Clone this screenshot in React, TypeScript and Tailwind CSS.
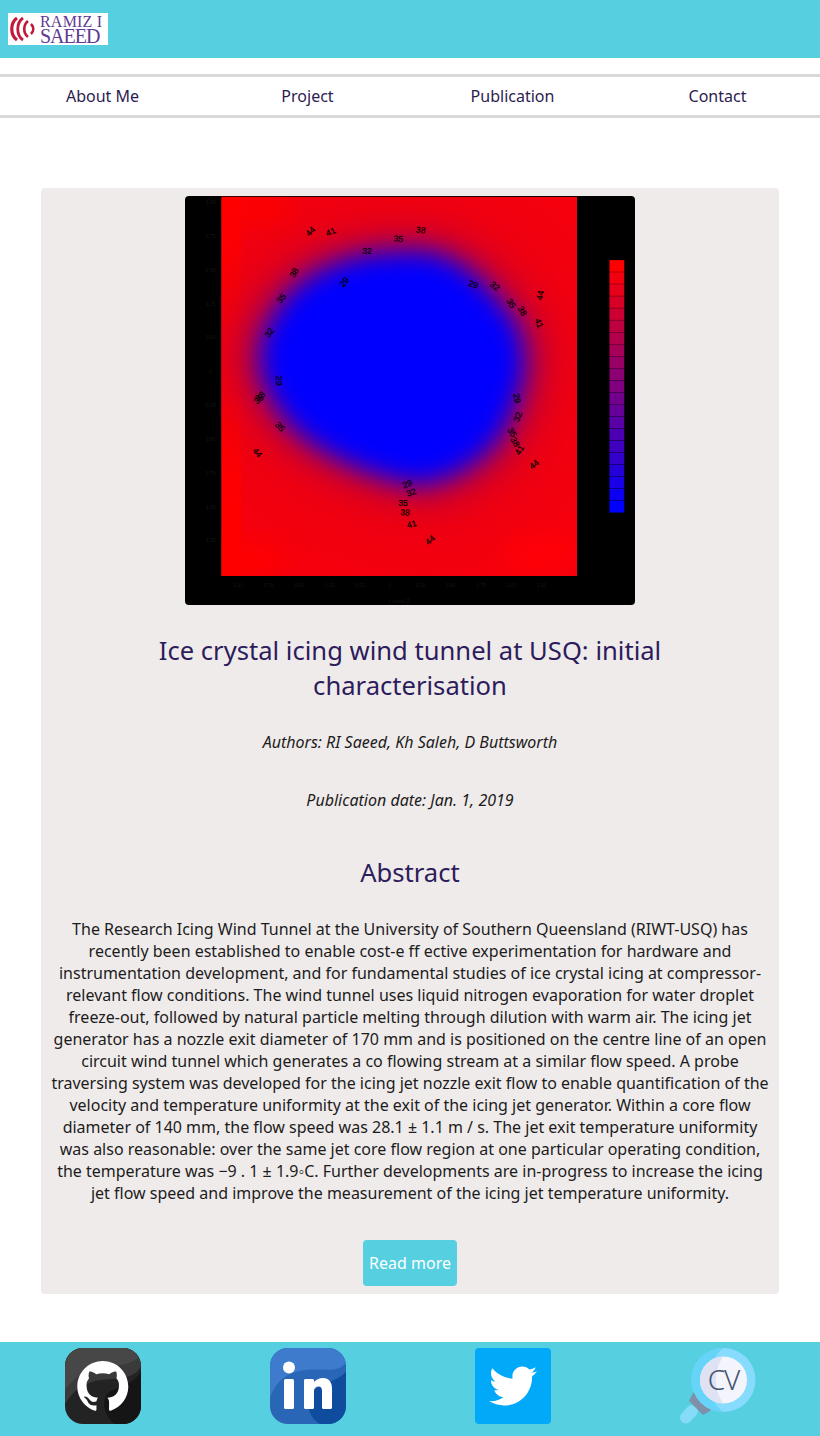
import { FaTwitter } from "react-icons/fa";

const labels: [string, number, number, number][] = [
  ["44", 391, 124, -45], ["41", 452, 125, -25], ["38", 722, 120, 5], ["35", 655, 146, 5], ["32", 561, 183, 0],
  ["38", 342, 248, -60], ["35", 304, 325, -50], ["32", 268, 428, -55], ["29", 493, 276, -50], ["29", 298, 572, 90],
  ["38", 240, 618, -40], ["35", 236, 628, -40], ["35", 300, 710, 50], ["44", 232, 788, 50],
  ["29", 880, 283, 20], ["32", 945, 288, 40], ["35", 993, 340, 60], ["38", 1027, 363, 60], ["41", 1077, 400, 70], ["44", 1080, 316, -80],
  ["29", 1011, 625, 80], ["32", 1013, 680, -70], ["35", 996, 727, 60], ["38", 1005, 756, 60], ["41", 1018, 780, -60], ["44", 1062, 823, -40],
  ["29", 682, 882, -20], ["32", 694, 907, -20], ["35", 669, 938, 0], ["38", 675, 967, 5], ["41", 695, 1002, -15], ["44", 750, 1050, -40],
];

const xTicks = ["1.00", "0.75", "0.50", "0.25", "0.00", "0", "0.25", "0.50", "0.75", "1.00", "1.00"];
const yTicks = ["1.00", "0.75", "0.50", "0.25", "0.00", "0", "0.25", "0.50", "0.75", "1.00", "1.25"];

const bar = Array.from({ length: 21 }, (_, i) => {
  const t = i / 20;
  const r = Math.round(255 * (1 - t));
  const b = Math.round(255 * t);
  return `rgb(${r},0,${b})`;
});

const blob =
  "M660 190C800 170 900 260 980 370C1040 440 1040 560 1000 640C970 760 860 860 720 880C560 860 350 760 290 640C220 540 240 440 290 370C350 260 500 190 660 190Z";

function Heatmap() {
  return (
    <svg viewBox="15 18 1350 1227" className="block h-[409px] w-[450px]">
      <defs>
        <clipPath id="plot">
          <rect x="124" y="20" width="1067" height="1138" />
        </clipPath>
        <filter id="b1" x="-40%" y="-40%" width="180%" height="180%" colorInterpolationFilters="sRGB">
          <feGaussianBlur stdDeviation="70" />
        </filter>
        <filter id="b2" x="-40%" y="-40%" width="180%" height="180%" colorInterpolationFilters="sRGB">
          <feGaussianBlur stdDeviation="46" />
        </filter>
        <filter id="b3" x="-40%" y="-40%" width="180%" height="180%" colorInterpolationFilters="sRGB">
          <feGaussianBlur stdDeviation="36" />
        </filter>
      </defs>
      <rect x="15" y="18" width="1350" height="1227" fill="#000" />
      <g clipPath="url(#plot)">
        <rect x="124" y="20" width="1067" height="1138" fill="#f5000e" />
        <rect x="124" y="20" width="60" height="1138" fill="#ff0000" />
        <ellipse cx="190" cy="1110" rx="120" ry="50" fill="#ff0000" filter="url(#b3)" />
        <ellipse cx="230" cy="60" rx="120" ry="50" fill="#ff0000" filter="url(#b3)" />
        <ellipse cx="1080" cy="1090" rx="120" ry="60" fill="#ff0008" filter="url(#b3)" />
        <g transform="translate(650 530) scale(1.4 1.38) translate(-650 -530)">
          <path d={blob} fill="#e40018" filter="url(#b1)" />
        </g>
        <g transform="translate(650 530) scale(1.13 1.12) translate(-650 -530)">
          <path d={blob} fill="#a00058" filter="url(#b2)" />
        </g>
        <path d={blob} fill="#0000ff" filter="url(#b3)" />
      </g>
      {labels.map(([t, x, y, r], i) => (
        <text
          key={i}
          x={x}
          y={y + 9}
          fontSize="26"
          textAnchor="middle"
          fontFamily="'Liberation Sans', sans-serif"
          fill="#000"
          stroke="#000"
          strokeWidth="0.6"
          transform={`rotate(${r} ${x} ${y})`}
        >
          {t}
        </text>
      ))}
      {bar.map((c, i) => (
        <rect key={i} x="1288" y={210 + i * 36.1} width="45" height="36.1" fill={c} stroke="#000" strokeOpacity="0.35" strokeWidth="1.5" />
      ))}
      {xTicks.map((t, i) => (
        <text key={i} x={175 + i * 91} y="1190" fontSize="15" textAnchor="middle" fontFamily="'Liberation Sans', sans-serif" fill="#161616">
          {t}
        </text>
      ))}
      {yTicks.map((t, i) => (
        <text key={i} x="92" y={42 + i * 101.5} fontSize="15" textAnchor="middle" fontFamily="'Liberation Sans', sans-serif" fill="#161616">
          {t}
        </text>
      ))}
      <text x="658" y="1238" fontSize="16" textAnchor="middle" fontFamily="'Liberation Sans', sans-serif" fill="#161616">
        r (mm) Z
      </text>
    </svg>
  );
}

function Logo() {
  return (
    <div className="flex h-8 w-[100px] items-center bg-white pl-[2px]">
      <svg viewBox="0 0 25 26" className="h-[26px] w-[25px] shrink-0" fill="none" stroke="#c2183c">
        <path d="M7 2C0 7 0 19 7 24" strokeWidth="3.2" />
        <path d="M13 2C6 7 6 19 13 24" strokeWidth="2.8" />
        <path d="M18 5C13 9 13 17 18 21" strokeWidth="2.6" />
        <path d="M21 8C24 11 24 15 21 18" strokeWidth="2.6" />
      </svg>
      <div className="ml-[5px] flex flex-col font-['Liberation_Serif',serif] text-[#5e3a92]">
        <span className="text-[16px] leading-[15px] tracking-[0.2px]">RAMIZ I</span>
        <span className="text-[20px] leading-[15px] tracking-[-1px]">SAEED</span>
      </div>
    </div>
  );
}

function Github() {
  return (
    <svg viewBox="0 0 76 76" className="h-[76px] w-[76px]">
      <defs>
        <clipPath id="gh">
          <rect width="76" height="76" rx="18" />
        </clipPath>
      </defs>
      <g clipPath="url(#gh)">
        <rect width="76" height="76" fill="#232323" />
        <path d="M0 0H76V18C70 32 50 30 36 32C20 34 8 42 0 56Z" fill="#3a3a3a" />
        <path d="M0 0H76V6C70 18 50 17 36 20C20 22 8 30 0 42Z" fill="#474747" />
        <path d="M76 24C66 38 54 38 44 44C36 50 38 68 50 76H76Z" fill="#151515" />
      </g>
      <g transform="translate(12.3 12.4) scale(2.125)">
        <path
          fill="#fff"
          d="M12 .297c-6.63 0-12 5.373-12 12 0 5.303 3.438 9.8 8.205 11.385.6.113.82-.258.82-.577 0-.285-.01-1.04-.015-2.04-3.338.724-4.042-1.61-4.042-1.61C4.422 18.07 3.633 17.7 3.633 17.7c-1.087-.744.084-.729.084-.729 1.205.084 1.838 1.236 1.838 1.236 1.07 1.835 2.809 1.305 3.495.998.108-.776.417-1.305.76-1.605-2.665-.3-5.466-1.332-5.466-5.93 0-1.31.465-2.38 1.235-3.22-.135-.303-.54-1.523.105-3.176 0 0 1.005-.322 3.3 1.23.96-.267 1.98-.399 3-.405 1.02.006 2.04.138 3 .405 2.28-1.552 3.285-1.23 3.285-1.23.645 1.653.24 2.873.12 3.176.765.84 1.23 1.91 1.23 3.22 0 4.61-2.805 5.625-5.475 5.92.42.36.81 1.096.81 2.22 0 1.606-.015 2.896-.015 3.286 0 .315.21.69.825.57C20.565 22.092 24 17.592 24 12.297c0-6.627-5.373-12-12-12"
        />
      </g>
    </svg>
  );
}

function Linkedin() {
  return (
    <svg viewBox="0 0 76 76" className="h-[76px] w-[76px]">
      <defs>
        <clipPath id="li">
          <rect width="76" height="76" rx="18" />
        </clipPath>
      </defs>
      <g clipPath="url(#li)">
        <rect width="76" height="76" fill="#2a66b6" />
        <path d="M0 0H76V14C70 26 50 20 36 22C18 24 6 32 0 50Z" fill="#3e7bcd" />
        <path d="M76 24C66 34 54 34 44 42C36 50 36 68 50 76H76Z" fill="#0f4c9e" />
      </g>
      <circle cx="19" cy="19.5" r="6" fill="#fff" />
      <rect x="14" y="31" width="10" height="30" rx="1.5" fill="#fff" />
      <path
        fill="#fff"
        d="M34 32.5C34 31.5 34.8 31 35.5 31H42.5C43.5 31 44 31.7 44 32.5V34C46 31.8 49 30 53 30C59 30 62 34 62 41V59.5C62 60.4 61.4 61 60.5 61H53.5C52.6 61 52 60.4 52 59.5V43C52 40 51 38.5 48.5 38.5C46 38.5 44 40 44 43V59.5C44 60.4 43.4 61 42.5 61H35.5C34.6 61 34 60.4 34 59.5Z"
      />
    </svg>
  );
}

function Cv() {
  return (
    <svg viewBox="0 0 76 76" className="h-[76px] w-[76px]">
      <path d="M12 63L6 69.5" stroke="#84dcf8" strokeWidth="12" strokeLinecap="round" />
      <path d="M13 45L9 53L23 67L30 63L36 50L22 38Z" fill="#7e91a9" />
      <circle cx="43.5" cy="32" r="32" fill="#87dbfd" />
      <path d="M43.5 0A32 32 0 0 0 43.5 64C35 60 30 46 30 32C30 18 35 5 43.5 0Z" fill="#66d4f8" />
      <circle cx="43.5" cy="32" r="23.5" fill="#f3f4fc" />
      <path d="M43.5 8.5A23.5 23.5 0 0 0 43.5 55.5C38 48 36 40 36 32C36 24 38 15 43.5 8.5Z" fill="#dfe2f4" />
      <text x="43.5" y="42" fontSize="28" fontWeight="300" textAnchor="middle" fontFamily="'Noto Sans', sans-serif" fill="#465570" letterSpacing="-1">
        CV
      </text>
    </svg>
  );
}

export default function App() {
  return (
    <div className="flex min-h-[1436px] w-full flex-col bg-white font-['Noto_Sans',sans-serif] text-[16px] leading-[22px]">
      <header className="flex h-[58px] items-start bg-[#56cfe1] pl-2 pt-[13px]">
        <Logo />
      </header>
      <nav className="mt-4 grid h-11 grid-cols-4 items-center border-y-[3px] border-[#d9d9d9] text-center text-[#2d1c4f]">
        <a>About Me</a>
        <a>Project</a>
        <a>Publication</a>
        <a>Contact</a>
      </nav>
      <main className="mx-[41px] mt-[70px] flex flex-col items-center rounded bg-[#f0ebeb] p-2 text-center">
        <div className="overflow-hidden rounded">
          <Heatmap />
        </div>
        <h1 className="mt-[28px] w-[560px] text-[25.6px] leading-[35px] text-[#2d1c5c]">
          Ice crystal icing wind tunnel at USQ: initial characterisation
        </h1>
        <p className="mt-[28px] italic text-[#1c1c1c]">Authors: RI Saeed, Kh Saleh, D Buttsworth</p>
        <p className="mt-[36px] italic text-[#1c1c1c]">Publication date: Jan. 1, 2019</p>
        <h2 className="mt-[44px] text-[25.6px] leading-[35px] text-[#2d1c5c]">Abstract</h2>
        <p className="mt-[28px] text-[#1c1c1c]">
          The Research Icing Wind Tunnel at the University of Southern Queensland (RIWT-USQ) has recently been established to enable cost-e ff ective experimentation for hardware and instrumentation development, and for fundamental studies of ice crystal icing at compressor-relevant flow conditions. The wind tunnel uses liquid nitrogen evaporation for water droplet freeze-out, followed by natural particle melting through dilution with warm air. The icing jet generator has a nozzle exit diameter of 170 mm and is positioned on the centre line of an open circuit wind tunnel which generates a co flowing stream at a similar flow speed. A probe traversing system was developed for the icing jet nozzle exit flow to enable quantification of the velocity and temperature uniformity at the exit of the icing jet generator. Within a core flow diameter of 140 mm, the flow speed was 28.1 ± 1.1 m / s. The jet exit temperature uniformity was also reasonable: over the same jet core flow region at one particular operating condition, the temperature was −9 . 1 ± 1.9◦C. Further developments are in-progress to increase the icing jet flow speed and improve the measurement of the icing jet temperature uniformity.
        </p>
        <button className="mt-[36px] h-[46px] w-[94px] rounded bg-[#56cfe1] text-white">Read more</button>
      </main>
      <footer className="mt-12 grid h-[94px] grid-cols-4 justify-items-center bg-[#56cfe1] pt-[6px]">
        <a>
          <Github />
        </a>
        <a>
          <Linkedin />
        </a>
        <a className="flex h-[76px] w-[76px] items-center justify-center rounded bg-[#03a9f9] text-white">
          <FaTwitter size={48} />
        </a>
        <a>
          <Cv />
        </a>
      </footer>
    </div>
  );
}
